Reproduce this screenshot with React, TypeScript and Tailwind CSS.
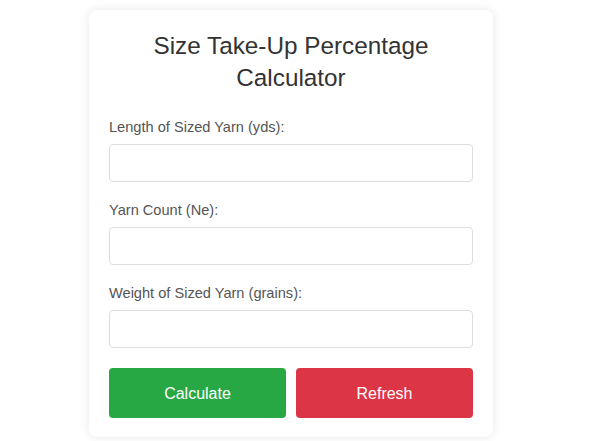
import React, { useState } from 'react';

type Field = { id: string; label: string };

const fields: Field[] = [
  { id: 'length', label: 'Length of Sized Yarn (yds):' },
  { id: 'count', label: 'Yarn Count (Ne):' },
  { id: 'weight', label: 'Weight of Sized Yarn (grains):' },
];

const App: React.FC = () => {
  const [values, setValues] = useState<Record<string, string>>({ length: '', count: '', weight: '' });
  const [result, setResult] = useState<string | null>(null);

  const calculate = () => {
    const length = parseFloat(values.length);
    const count = parseFloat(values.count);
    const weight = parseFloat(values.weight);
    if (!length || !count || !weight) return;
    // unsized weight in grains = length / (count * 840) * 7000
    const unsized = (length / (count * 840)) * 7000;
    setResult((((weight - unsized) / unsized) * 100).toFixed(2));
  };

  const refresh = () => {
    setValues({ length: '', count: '', weight: '' });
    setResult(null);
  };

  return (
    <div className="min-h-screen bg-white pt-[10px] font-['Liberation_Sans',Arial,sans-serif]">
      <div className="ml-[89px] w-[404px] rounded-lg bg-white px-5 pt-5 pb-[19px] shadow-[0_0_10px_rgba(0,0,0,0.1)]">
        <h1 className="mb-[25px] text-center text-[24.3px] leading-[32px] font-normal text-[#333]">
          Size Take-Up Percentage Calculator
        </h1>

        {fields.map((f) => (
          <div key={f.id} className="mb-[20.5px]">
            <label htmlFor={f.id} className="mb-2 block text-[14.6px] leading-[16.6px] text-[#555]">
              {f.label}
            </label>
            <input
              id={f.id}
              type="number"
              value={values[f.id]}
              onChange={(e) => setValues({ ...values, [f.id]: e.target.value })}
              className="block h-[38px] w-full rounded border border-[#ddd] bg-white px-2 text-[16px] outline-none"
            />
          </div>
        ))}

        <div className="mt-[-0.5px] flex gap-[10px]">
          <button
            onClick={calculate}
            className="h-[50px] flex-1 rounded bg-[#28a745] pt-[2px] text-[16px] text-white"
          >
            Calculate
          </button>
          <button
            onClick={refresh}
            className="h-[50px] flex-1 rounded bg-[#dc3545] pt-[2px] text-[16px] text-white"
          >
            Refresh
          </button>
        </div>

        {result !== null && (
          <p className="mt-4 text-center text-[16px] text-[#333]">Size Take-Up: {result}%</p>
        )}
      </div>
    </div>
  );
};

export default App;
